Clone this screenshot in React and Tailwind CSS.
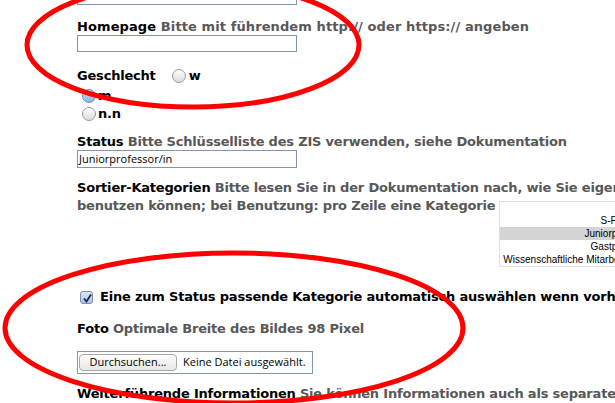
import React from "react";

const lab = "font-bold text-[13px] leading-[16px] text-black whitespace-nowrap tracking-[-0.2px]";
const hint = "text-[#585858]";
const ui = { fontFamily: '"DejaVu Sans", Verdana, sans-serif' };
const small = { fontFamily: '"Open Sans", "DejaVu Sans", sans-serif' };
const list = { fontFamily: '"Liberation Sans", Arial, sans-serif' };

function Radio({ checked }) {
  return (
    <span
      className={
        "inline-block w-[14px] h-[14px] rounded-full border shrink-0 " +
        (checked
          ? "border-[#6f8fb8] bg-gradient-to-b from-[#c9dcf3] to-[#8fb3e3]"
          : "border-[#9a9a9a] bg-gradient-to-b from-[#ffffff] to-[#dcdcdc]")
      }
    />
  );
}

export default function App() {
  return (
    <div className="relative w-[615px] h-[403px] overflow-hidden bg-white" style={ui}>
      <div className="w-[800px] pl-[77px]">
        {/* cut-off input */}
        <div className="w-[220px] h-[17px] mt-[-12px] border border-[#7f97b5] bg-white" />
        <div className="font-bold text-[13px] leading-[16px] text-black whitespace-nowrap tracking-[0.1px] mt-[14px]">
          Homepage <span className={hint}>Bitte mit führendem http:// oder https:// angeben</span>
        </div>
        <div className="w-[220px] h-[17px] border border-[#7f97b5] bg-white" />

        <div className="flex items-center mt-[16px] h-[16px]">
          <span className={lab}>Geschlecht</span>
          <span className="ml-[16px] flex items-center gap-[3px]">
            <Radio />
            <span className={lab}>w</span>
          </span>
        </div>
        <div className="flex flex-col pl-[5px] mt-[3px]">
          <div className="flex items-center h-[18px] gap-[2px]">
            <Radio checked />
            <span className={lab}>m</span>
          </div>
          <div className="flex items-center h-[18px] gap-[2px]">
            <Radio />
            <span className={lab}>n.n</span>
          </div>
        </div>

        <div className={lab + " mt-[11px]"}>
          Status <span className={hint}>Bitte Schlüsselliste des ZIS verwenden, siehe Dokumentation</span>
        </div>
        <div className="w-[220px] h-[18px] border border-[#7f97b5] bg-white flex items-center px-[1px] text-[11px] text-black" style={small}>
          Juniorprofessor/in
        </div>

        <div className="font-bold text-[13px] leading-[18px] text-black whitespace-nowrap tracking-[-0.2px] mt-[11px]">
          Sortier-Kategorien <span className={hint}>Bitte lesen Sie in der Dokumentation nach, wie Sie eigene Kategorien</span>
          <br />
          <span className={hint}>benutzen können; bei Benutzung: pro Zeile eine Kategorie</span>
          <span className="inline-block align-top mt-[4px] ml-[4px] border border-[#e0e0e0] bg-white font-normal tracking-normal text-[10px] leading-[13px] text-black text-right" style={list}>
            <span className="block h-[12px]" />
            <span className="block pr-[2px]">S-Professor/in</span>
            <span className="block pr-[2px] bg-[#d4d4d4]">Juniorprofessor/in</span>
            <span className="block pr-[2px]">Gastprofessor/in</span>
            <span className="block pr-[22px] pl-[3px]">Wissenschaftliche Mitarbeiter/in</span>
          </span>
        </div>

        <div className="flex items-center mt-[22px] h-[16px] pl-[3px] gap-[7px]">
          <span className="relative inline-block w-[13px] h-[13px] rounded-[3px] border border-[#7d8fb0] bg-gradient-to-b from-[#dbe6f6] to-[#a9c1e4]">
            <svg viewBox="0 0 13 13" className="absolute inset-0 w-[13px] h-[13px]">
              <path d="M3 6.5 L5.5 9.5 L10 2.5" fill="none" stroke="#1c2a44" strokeWidth="1.8" />
            </svg>
          </span>
          <span className={lab}>Eine zum Status passende Kategorie automatisch auswählen wenn vorhanden</span>
        </div>

        <div className={lab + " mt-[16px]"}>
          Foto <span className={hint}>Optimale Breite des Bildes 98 Pixel</span>
        </div>

        <div className="mt-[14px] w-[236px] h-[23px] border border-[#7f97b5] flex items-center pl-[1px] gap-[6px] text-[11px] text-black" style={small}>
          <span className="h-[17px] w-[98px] rounded-[4px] border border-[#a8a8a8] bg-gradient-to-b from-[#ffffff] to-[#e6e6e6] flex items-center justify-center">
            Durchsuchen...
          </span>
          <span>Keine Datei ausgewählt.</span>
        </div>

        <div className={lab + " mt-[12px]"}>
          Weiterführende Informationen <span className={hint}>Sie können Informationen auch als separate Datei hochladen</span>
        </div>
      </div>

      {/* annotation ellipses */}
      <svg className="absolute inset-0 pointer-events-none" width="615" height="403" viewBox="0 0 615 403">
        <ellipse cx="193" cy="45" rx="166" ry="62" fill="none" stroke="#ff0000" strokeWidth="5" />
        <ellipse cx="234" cy="328" rx="229" ry="75" fill="none" stroke="#ff0000" strokeWidth="5" />
      </svg>
    </div>
  );
}
